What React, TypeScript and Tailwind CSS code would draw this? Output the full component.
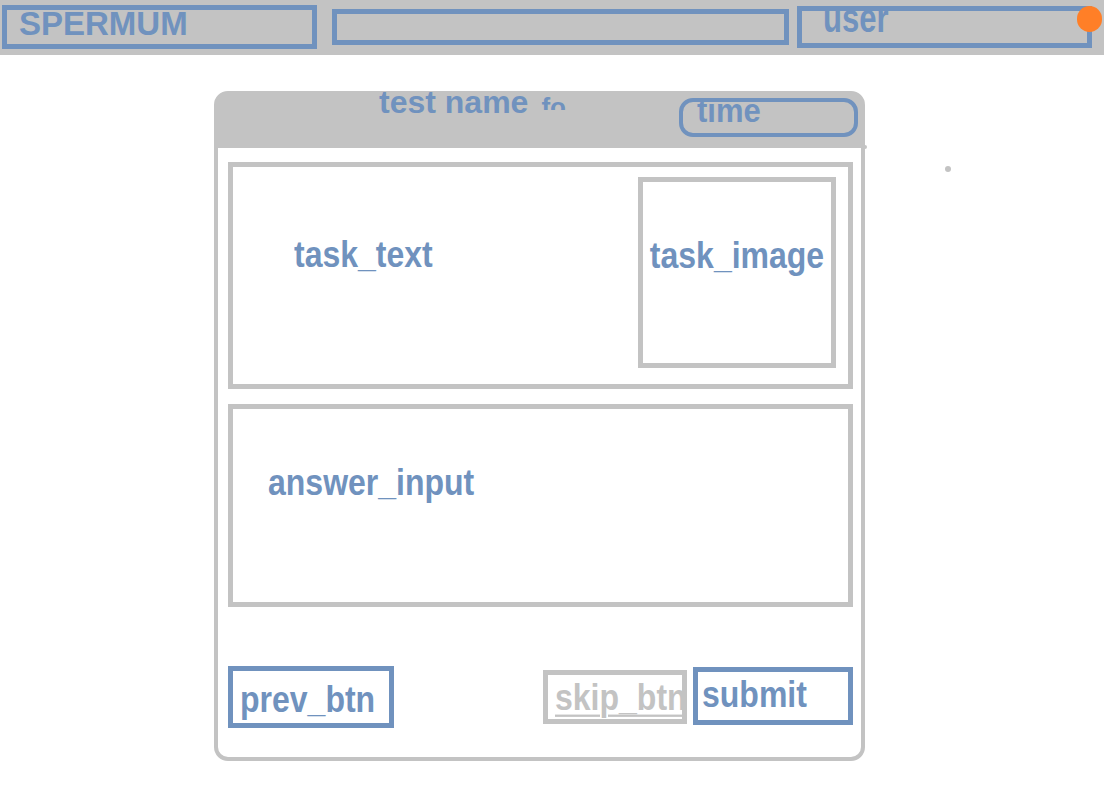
import React from "react";

const F = "font-['Liberation_Sans',Arial,sans-serif] font-bold leading-none whitespace-nowrap";

export default function App() {
  return (
    <div className={`relative w-[1104px] h-[794px] bg-white ${F}`}>
      {/* top bar */}
      <div className="h-[55px] bg-[#c3c3c3] flex items-start">
        <div className="ml-[2px] mt-[5px] w-[315px] h-[44px] border-[5px] border-[#7092be] pl-[12px]">
          <div className="mt-[-3px] text-[33px] text-[#7092be]">SPERMUM</div>
        </div>
        <div className="ml-[15px] mt-[9px] w-[457px] h-[36px] border-[5px] border-[#7092be]" />
        <div className="relative ml-[8px] mt-[6px] w-[295px] h-[42px] border-[5px] border-[#7092be] pl-[21px] flex items-start">
          <span className="inline-block mt-[-5px] text-[31px] text-[#7092be] origin-[50%_85%] scale-y-[1.3]">user</span>
          <div className="absolute left-[275px] top-[-5px] w-[25px] h-[26px] rounded-full bg-[#ff7f27]" />
        </div>
      </div>

      {/* card */}
      <div className="ml-[214px] mt-[36px] w-[651px] h-[670px] border-4 border-[#c3c3c3] rounded-[14px] flex flex-col">
        <div className="h-[53px] bg-[#c3c3c3] flex items-start">
          <span className="ml-[161px] mt-[-9px] text-[32px] text-[#7092be]">test name</span>
          <div className="ml-[13px] mt-[2px] h-[13px] overflow-hidden">
            <span className="block mt-[-3px] text-[26px] text-[#7092be]">fo</span>
          </div>
          <div className="ml-auto mr-[3px] mt-[3px] w-[179px] h-[39px] border-4 border-[#7092be] rounded-[14px] pl-[14px] flex items-start">
            <span className="inline-block mt-[-6px] text-[31px] text-[#7092be] origin-[50%_85%] scale-y-[1.08]">time</span>
          </div>
        </div>

        <div className="flex-1 flex flex-col pl-[10px] pr-[8px] pt-[14px]">
          {/* task box */}
          <div className="h-[227px] border-[5px] border-[#c3c3c3] flex items-start">
            <span className="ml-[61px] mt-[73px] inline-block text-[32px] text-[#7092be] origin-[50%_85%] scale-y-[1.15]">task_text</span>
            <div className="ml-auto mr-[12px] mt-[10px] w-[198px] h-[191px] border-[5px] border-[#c3c3c3] flex items-start justify-center">
              <span className="mt-[59px] inline-block text-[32px] text-[#7092be] origin-[50%_85%] scale-y-[1.15]">task_image</span>
            </div>
          </div>

          {/* answer box */}
          <div className="mt-[15px] h-[203px] border-[5px] border-[#c3c3c3] pl-[35px] flex items-start">
            <span className="mt-[59px] inline-block text-[32px] text-[#7092be] origin-[50%_85%] scale-y-[1.15]">answer_input</span>
          </div>

          {/* buttons */}
          <div className="mt-[59px] flex items-start">
            <div className="w-[166px] h-[62px] border-[5px] border-[#7092be] pl-[7px] flex items-start">
              <span className="mt-[14px] inline-block text-[32px] text-[#7092be] origin-[50%_85%] scale-y-[1.15]">prev_btn</span>
            </div>
            <div className="ml-auto mt-[4px] w-[144px] h-[54px] border-[5px] border-[#c3c3c3] pl-[7px] flex items-start">
              <span className="mt-[8px] inline-block text-[32px] text-[#c3c3c3] underline decoration-2 underline-offset-[4px] origin-[50%_85%] scale-y-[1.15]">skip_btn</span>
            </div>
            <div className="ml-[6px] mt-[1px] w-[160px] h-[58px] border-[5px] border-[#7092be] pl-[4px] flex items-start">
              <span className="mt-[8px] inline-block text-[32px] text-[#7092be] origin-[50%_85%] scale-y-[1.15]">submit</span>
            </div>
          </div>
        </div>
      </div>

      {/* stray dots */}
      <div className="absolute left-[863px] top-[145px] w-[4px] h-[4px] rounded-full bg-[#c3c3c3]" />
      <div className="absolute left-[945px] top-[166px] w-[6px] h-[6px] rounded-full bg-[#c3c3c3]" />
    </div>
  );
}
